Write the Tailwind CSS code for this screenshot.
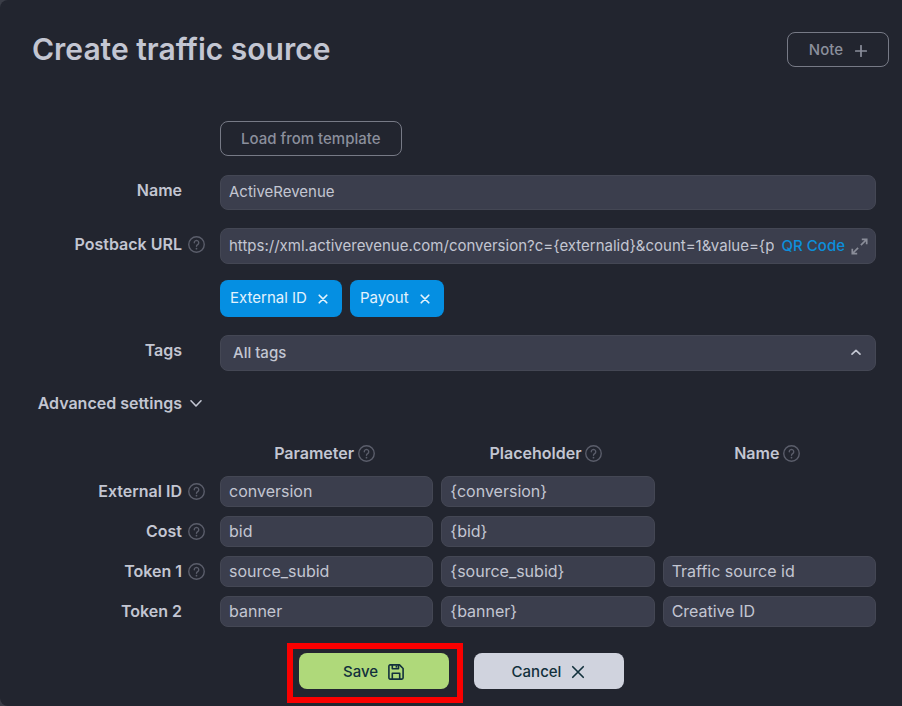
<!DOCTYPE html>
<html lang="en">
<head>
	<meta charset="UTF-8">
	<meta name="viewport" content="width=device-width, initial-scale=1.0">
	<title>Create traffic source</title>
	<script src="https://cdn.jsdelivr.net/npm/@tailwindcss/browser@4"></script>
</head>
<body class="bg-[#3a3d47] font-['Inter',sans-serif] text-[#c3c6d2]">
	<!-- Shared icons -->
	<svg class="hidden">
		<symbol id="icon-help" viewBox="0 0 16 16" fill="none" stroke="currentColor" stroke-linecap="round" stroke-linejoin="round">
			<circle cx="8" cy="8" r="7.3" stroke-width="1.3" />
			<path d="M5.9 6.3a2.1 2.1 0 1 1 3.2 1.8c-.7.45-1.1.8-1.1 1.6" stroke-width="1.3" />
			<path d="M8 11.8v.1" stroke-width="1.6" />
		</symbol>
		<symbol id="icon-close" viewBox="0 0 16 16" fill="none" stroke="currentColor" stroke-linecap="round">
			<path d="M2 2l12 12M14 2L2 14" />
		</symbol>
	</svg>

	<main class="min-h-screen rounded-l-lg bg-[#22252f]">
		<!-- Header -->
		<header class="flex items-start justify-between pt-8 pr-[13px] pl-8">
			<h1 class="text-[30px] leading-[34px] font-semibold">Create traffic source</h1>
			<button type="button" class="flex h-[35px] items-center gap-3 rounded-lg border border-[#777a86] px-[21px] pt-0.5 text-[15px] font-medium text-[#8b8f9c]">
				Note
				<svg class="size-3" viewBox="0 0 12 12" fill="none" stroke="currentColor" stroke-width="1.7" stroke-linecap="round"><path d="M6 .7v10.6M.7 6h10.6" /></svg>
			</button>
		</header>

		<form class="pt-[54px] pr-[22px]">
			<div class="pr-1 pl-[220px]">
				<button type="button" class="h-[35px] rounded-lg border border-[#777a86] px-5 pt-0.5 text-[15px] font-medium text-[#8b8f9c]">Load from template</button>
			</div>

			<!-- Name -->
			<div class="mt-[19px] flex pr-1">
				<label for="name" class="w-[220px] shrink-0 pt-[3px] pr-[38px] text-right text-base font-semibold">Name</label>
				<input id="name" type="text" value="ActiveRevenue" class="h-[35px] min-w-0 flex-1 rounded-lg border border-[#444754] bg-[#3b3e4d] px-2 pb-0.5 text-[15px]">
			</div>

			<!-- Postback URL -->
			<div class="mt-[18px] flex pr-1">
				<div class="flex h-8 w-[220px] shrink-0 items-center justify-end gap-1.5 pr-[15px]">
					<label for="postback" class="text-base font-semibold">Postback URL</label>
					<svg class="size-[17px] text-[#5b5e6b]"><use href="#icon-help" /></svg>
				</div>
				<div class="min-w-0 flex-1">
					<div class="flex h-9 items-center rounded-lg border border-[#444754] bg-[#3b3e4d] pr-[7px] pl-2">
						<input id="postback" type="text" value="https://xml.activerevenue.com/conversion?c={externalid}&amp;count=1&amp;value={payout}" class="min-w-0 flex-1 text-[15px]">
						<a href="#" class="ml-2 text-[15px] font-medium text-[#0c8edb]">QR Code</a>
						<button type="button" aria-label="Expand" class="ml-1.5 text-[#8a8d99]">
							<svg class="size-[17px]" viewBox="0 0 17 17" fill="none" stroke="currentColor" stroke-width="1.7"><path d="M10.8 1.3h4.9v4.9M15.5 1.5l-5.6 5.6M6.2 15.7H1.3v-4.9M1.5 15.5l5.6-5.6" /></svg>
						</button>
					</div>
					<div class="mt-4 flex gap-2">
						<button type="button" class="flex h-[37px] items-center gap-[11px] rounded-lg bg-[#058fe2] pr-3.5 pl-2.5 text-[15px] text-[#e3f2fc]">
							External ID
							<svg class="size-2.5 stroke-[2.8]"><use href="#icon-close" /></svg>
						</button>
						<button type="button" class="flex h-[37px] items-center gap-[11px] rounded-lg bg-[#058fe2] pr-3.5 pl-2.5 text-[15px] text-[#e3f2fc]">
							Payout
							<svg class="size-2.5 stroke-[2.8]"><use href="#icon-close" /></svg>
						</button>
					</div>
				</div>
			</div>

			<!-- Tags -->
			<div class="mt-[18px] flex pr-1">
				<label for="tags" class="w-[220px] shrink-0 pt-[3px] pr-[38px] text-right text-base font-semibold">Tags</label>
				<div class="relative min-w-0 flex-1">
					<select id="tags" class="h-9 w-full appearance-none rounded-lg border border-[#444754] bg-[#3b3e4d] px-3 text-[15px] font-medium">
						<option>All tags</option>
					</select>
					<svg class="pointer-events-none absolute top-3 right-3.5 size-3" viewBox="0 0 12 12" fill="none" stroke="currentColor" stroke-width="1.7" stroke-linecap="round" stroke-linejoin="round"><path d="M2 7.2L6 3.4l4 3.8" /></svg>
				</div>
			</div>

			<!-- Advanced settings -->
			<div class="mt-5 flex w-[220px] justify-end pr-4">
				<button type="button" class="flex items-center gap-2 text-base font-semibold">
					Advanced settings
					<svg class="size-3.5" viewBox="0 0 14 14" fill="none" stroke="currentColor" stroke-width="1.6" stroke-linecap="round" stroke-linejoin="round"><path d="M1 4.8L6 10l5-5.2" /></svg>
				</button>
			</div>

			<table class="mt-5 w-full table-fixed">
				<thead>
					<tr class="h-9">
						<td class="w-[216px]"></td>
						<th class="px-1 font-semibold"><span class="flex items-center justify-center gap-1 pr-1">Parameter <svg class="size-[17px] text-[#5b5e6b]"><use href="#icon-help" /></svg></span></th>
						<th class="px-1 font-semibold"><span class="flex items-center justify-center gap-1 pr-1">Placeholder <svg class="size-[17px] text-[#5b5e6b]"><use href="#icon-help" /></svg></span></th>
						<th class="px-1 font-semibold"><span class="flex items-center justify-center gap-1 pr-1">Name <svg class="size-[17px] text-[#5b5e6b]"><use href="#icon-help" /></svg></span></th>
					</tr>
				</thead>
				<tbody>
					<tr class="h-10">
						<th class="pr-[11px] font-semibold"><span class="flex items-center justify-end gap-1.5">External ID <svg class="size-[17px] text-[#5b5e6b]"><use href="#icon-help" /></svg></span></th>
						<td class="px-1"><input type="text" aria-label="External ID parameter" value="conversion" class="block h-[31px] w-full rounded-lg border border-[#444754] bg-[#3b3e4d] px-2 text-base"></td>
						<td class="px-1"><input type="text" aria-label="External ID placeholder" value="{conversion}" class="block h-[31px] w-full rounded-lg border border-[#444754] bg-[#3b3e4d] px-2 text-base"></td>
						<td></td>
					</tr>
					<tr class="h-10">
						<th class="pr-[11px] font-semibold"><span class="flex items-center justify-end gap-1.5">Cost <svg class="size-[17px] text-[#5b5e6b]"><use href="#icon-help" /></svg></span></th>
						<td class="px-1"><input type="text" aria-label="Cost parameter" value="bid" class="block h-[31px] w-full rounded-lg border border-[#444754] bg-[#3b3e4d] px-2 text-base"></td>
						<td class="px-1"><input type="text" aria-label="Cost placeholder" value="{bid}" class="block h-[31px] w-full rounded-lg border border-[#444754] bg-[#3b3e4d] px-2 text-base"></td>
						<td></td>
					</tr>
					<tr class="h-10">
						<th class="pr-[11px] font-semibold"><span class="flex items-center justify-end gap-1.5">Token 1 <svg class="size-[17px] text-[#5b5e6b]"><use href="#icon-help" /></svg></span></th>
						<td class="px-1"><input type="text" aria-label="Token 1 parameter" value="source_subid" class="block h-[31px] w-full rounded-lg border border-[#444754] bg-[#3b3e4d] px-2 text-base"></td>
						<td class="px-1"><input type="text" aria-label="Token 1 placeholder" value="{source_subid}" class="block h-[31px] w-full rounded-lg border border-[#444754] bg-[#3b3e4d] px-2 text-base"></td>
						<td class="px-1"><input type="text" aria-label="Token 1 name" value="Traffic source id" class="block h-[31px] w-full rounded-lg border border-[#444754] bg-[#3b3e4d] px-2 text-base"></td>
					</tr>
					<tr class="h-10">
						<th class="pr-[34px] text-right font-semibold">Token 2</th>
						<td class="px-1"><input type="text" aria-label="Token 2 parameter" value="banner" class="block h-[31px] w-full rounded-lg border border-[#444754] bg-[#3b3e4d] px-2 text-base"></td>
						<td class="px-1"><input type="text" aria-label="Token 2 placeholder" value="{banner}" class="block h-[31px] w-full rounded-lg border border-[#444754] bg-[#3b3e4d] px-2 text-base"></td>
						<td class="px-1"><input type="text" aria-label="Token 2 name" value="Creative ID" class="block h-[31px] w-full rounded-lg border border-[#444754] bg-[#3b3e4d] px-2 text-base"></td>
					</tr>
				</tbody>
			</table>

			<!-- Actions -->
			<div class="mt-3 flex items-start justify-center gap-[11px] pl-[30px]">
				<div class="border-[6px] border-[#fa0000] pt-1 pr-2 pb-2 pl-1.5">
					<button type="submit" class="flex h-9 w-[150px] items-center justify-center gap-2.5 rounded-lg bg-[#afd97a] pt-0.5 text-[15px] font-medium text-[#12303c]">
						Save
						<svg class="size-4" viewBox="0 0 16 16" fill="none" stroke="currentColor" stroke-width="1.6" stroke-linejoin="round"><path d="M2.2.9h9.3l3.6 3.6v9.3a1.3 1.3 0 0 1-1.3 1.3H2.2A1.3 1.3 0 0 1 .9 13.8V2.2A1.3 1.3 0 0 1 2.2.9z" /><path d="M4.3 1v3.8h6.2V1M4.3 15V9.2h7.4V15" /><path d="M8.4 1.6v2" /></svg>
					</button>
				</div>
				<button type="button" class="mt-2.5 flex h-9 w-[150px] items-center justify-center gap-2.5 rounded-lg bg-[#d0d3de] pt-0.5 text-[15px] font-medium text-[#12303c]">
					Cancel
					<svg class="size-3.5 stroke-[1.9]"><use href="#icon-close" /></svg>
				</button>
			</div>
		</form>
	</main>
</body>
</html>
